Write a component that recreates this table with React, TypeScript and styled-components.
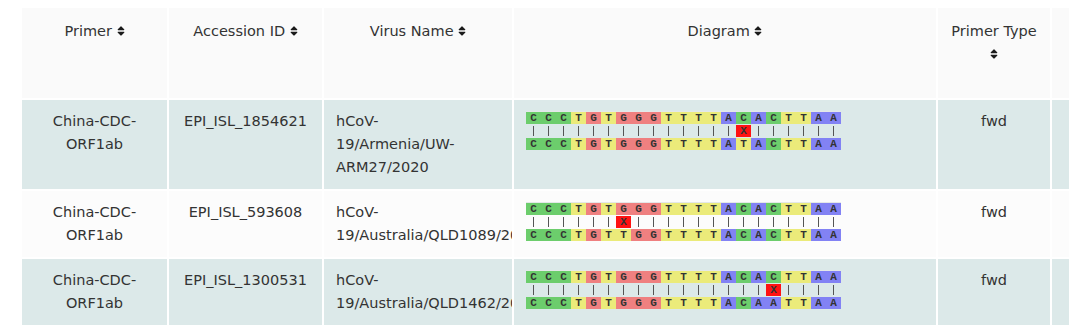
import React from "react";
import styled, { createGlobalStyle } from "styled-components";
import { FaSort } from "react-icons/fa";

interface IHit {
  primer: string;
  accession: string;
  virus: string;
  target: string;
  type: string;
}

const PRIMER = "CCCTGTGGGTTTTACACTTAA";

const hits: IHit[] = [
  {
    primer: "China-CDC-ORF1ab",
    accession: "EPI_ISL_1854621",
    virus: "hCoV-19/Armenia/UW-ARM27/2020",
    target: "CCCTGTGGGTTTTATACTTAA",
    type: "fwd",
  },
  {
    primer: "China-CDC-ORF1ab",
    accession: "EPI_ISL_593608",
    virus: "hCoV-19/Australia/QLD1089/2020",
    target: "CCCTGTTGGTTTTACACTTAA",
    type: "fwd",
  },
  {
    primer: "China-CDC-ORF1ab",
    accession: "EPI_ISL_1300531",
    virus: "hCoV-19/Australia/QLD1462/2020",
    target: "CCCTGTGGGTTTTACAATTAA",
    type: "fwd",
  },
];

const baseColors: Record<string, string> = {
  A: "#8282f4",
  C: "#6ccd6c",
  G: "#ef8080",
  T: "#ebeb7a",
};

const columns = [
  { title: "Primer", width: 145 },
  { title: "Accession ID", width: 153 },
  { title: "Virus Name", width: 188 },
  { title: "Diagram", width: 422 },
  { title: "Primer Type", width: 112 },
  { title: "", width: 70 },
];

export default function App() {
  return (
    <>
      <GlobalStyle />
      <Wrapper>
        <Table>
          <colgroup>
            {columns.map((c, i) => (
              <col key={i} style={{ width: c.width }} />
            ))}
          </colgroup>
          <thead>
            <tr>
              {columns.map((c, i) => (
                <HeadCell key={i}>
                  {c.title && (
                    <>
                      {c.title} <SortIcon />
                    </>
                  )}
                </HeadCell>
              ))}
            </tr>
          </thead>
          <tbody>
            {hits.map((h, i) => (
              <tr key={h.accession}>
                <Cell $striped={i % 2 === 0}>{h.primer}</Cell>
                <Cell $striped={i % 2 === 0}>{h.accession}</Cell>
                <Cell $striped={i % 2 === 0} $align="left">
                  <VirusName>{h.virus}</VirusName>
                </Cell>
                <Cell $striped={i % 2 === 0} $align="left">
                  <Diagram primer={PRIMER} target={h.target} />
                </Cell>
                <Cell $striped={i % 2 === 0}>{h.type}</Cell>
                <Cell $striped={i % 2 === 0} />
              </tr>
            ))}
          </tbody>
        </Table>
      </Wrapper>
    </>
  );
}

function Diagram({ primer, target }: { primer: string; target: string }) {
  const top = primer.split("");
  const bottom = target.split("");
  return (
    <Seq>
      {top.map((b, i) => (
        <Base key={"t" + i} $base={b}>
          {b}
        </Base>
      ))}
      {top.map((b, i) => (
        <Match key={"m" + i} $miss={b !== bottom[i]}>
          {b !== bottom[i] ? "X" : ""}
        </Match>
      ))}
      {bottom.map((b, i) => (
        <Base key={"b" + i} $base={b}>
          {b}
        </Base>
      ))}
    </Seq>
  );
}

const GlobalStyle = createGlobalStyle`
  body {
    margin: 0;
    background: #ffffff;
    font-family: "DejaVu Sans", Verdana, sans-serif;
    color: #333333;
  }
`;

const Wrapper = styled.div`
  margin: 6px 0 0 20px;
  width: 1049px;
  overflow: hidden;
`;

const Table = styled.table`
  table-layout: fixed;
  border-collapse: separate;
  border-spacing: 2px;
  width: 1104px;
  font-size: 14.5px;
  line-height: 23px;
`;

const HeadCell = styled.th`
  background: #fafafa;
  font-weight: normal;
  text-align: center;
  vertical-align: top;
  padding: 12px 10px 0;
  height: 78px;
`;

const SortIcon = styled(FaSort)`
  width: 8px;
  height: 12px;
  vertical-align: -1px;
  color: #1a1a1a;
`;

const Cell = styled.td<{ $striped?: boolean; $align?: "left" | "center" }>`
  background: ${(p) => (p.$striped ? "#dce9e9" : "#fcfcfc")};
  text-align: ${(p) => p.$align || "center"};
  vertical-align: top;
  padding: 10px 12px;
  overflow: hidden;
`;

const VirusName = styled.div`
  width: 150px;
`;

const Seq = styled.div`
  display: grid;
  grid-template-columns: repeat(21, 15px);
  grid-template-rows: 12px 12px 12px;
  row-gap: 1px;
  width: max-content;
  margin-top: 1px;
  border-top: 1px solid #e4e8e8;
`;

const Base = styled.span<{ $base: string }>`
  background: ${(p) => baseColors[p.$base]};
  font-family: "Liberation Mono", "Courier New", monospace;
  font-size: 11px;
  font-weight: bold;
  line-height: 12px;
  text-align: center;
  color: #333333;
`;

const Match = styled.span<{ $miss?: boolean }>`
  display: flex;
  align-items: center;
  justify-content: center;
  background: ${(p) => (p.$miss ? "#ff1212" : "transparent")};
  font-family: "Liberation Mono", "Courier New", monospace;
  font-size: 11px;
  font-weight: bold;
  line-height: 12px;
  color: #333333;
  &::before {
    content: "";
    display: ${(p) => (p.$miss ? "none" : "block")};
    width: 1px;
    height: 10px;
    background: #555555;
  }
`;
